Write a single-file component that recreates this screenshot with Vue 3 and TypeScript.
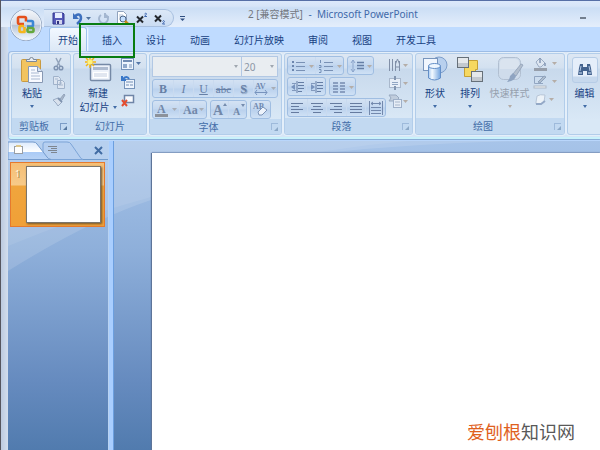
<script setup lang="ts">
import { ref } from 'vue'

const tabs: string[] = ['开始', '插入', '设计', '动画', '幻灯片放映', '审阅', '视图', '开发工具']
const activeTab = ref('开始')
const highlightedTab = '插入'
</script>

<template>
  <div class="window">
    <header class="titlebar">
      <button class="office" aria-label="Office">
        <svg width="34" height="34" viewBox="0 0 34 34">
          <defs>
            <linearGradient id="orb" x1="0" y1="0" x2="0" y2="1">
              <stop offset="0" stop-color="#f4f6fa" /><stop offset=".48" stop-color="#d5dce7" />
              <stop offset=".5" stop-color="#b6c3d6" /><stop offset="1" stop-color="#f3f9ff" />
            </linearGradient>
          </defs>
          <circle cx="17" cy="17" r="16" fill="#8d9fba" />
          <circle cx="17" cy="17" r="15" fill="url(#orb)" stroke="#eef5fd" />
          <g fill="none" stroke-width="2.6" stroke-linejoin="round">
            <path d="M15 16H10.500q-1.500 0-1.500-1.500V10.500q0-1.500 1.500-1.500h5q1.500 0 1.500 1.500v3" stroke="#e5501b" />
            <path d="M18 13h4.500q1.500 0 1.500 1.500v2.500q0 1.500-1.500 1.500H18" stroke="#3b87d4" />
            <path d="M15 18h-3q-1.500 0-1.500 1.500v3q0 1.500 1.500 1.500h3.500v-5" stroke="#f5b51c" />
            <path d="M18 20h5q1.500 0 1.500 1.500v1q0 1.500-1.500 1.500h-3q-1.500 0-1.500-1.500v-2" stroke="#64a83c" />
          </g>
        </svg>
      </button>
      <div class="quick">
        <button aria-label="保存">
          <svg width="13" height="13"><path d="M1 1h10l1 1v10H1z" fill="#5558b8" stroke="#34378f" /><path d="M3 1h7v5H3z" fill="#e7edff" /><path d="M4 8h6v4H4z" fill="#d3d5ed" /><path d="M5 9h2v3H5z" fill="#30337d" /></svg>
        </button>
        <button class="undo" aria-label="撤消">
          <svg width="20" height="13"><path d="M2 1v6h6z" fill="#3e70be" /><path d="M4 5C6 1 10 2 10 6q0 3-4 6" fill="none" stroke="#3e70be" stroke-width="2.500" /><path d="M15 5h5l-2.500 3z" fill="#51739f" /></svg>
        </button>
        <button aria-label="恢复">
          <svg width="13" height="13"><path d="M4 3a4.500 4.500 0 1 0 5 0M8 1v4h4" fill="none" stroke="#a3b6d0" stroke-width="2" /></svg>
        </button>
        <button aria-label="打印预览">
          <svg width="14" height="14"><path d="M1.500.5h6l3 3v9h-9z" fill="#fff" stroke="#91a3bd" /><path d="M3 4h4M3 6h4" stroke="#b6c4d9" /><circle cx="7" cy="8" r="3" fill="#c4dfff" stroke="#4b6486" /><path d="m9 10 3 3" stroke="#c98b1e" stroke-width="2.500" /></svg>
        </button>
        <button aria-label="上标">
          <svg width="12" height="13"><path d="m1 4.500 6 6m0-6-6 6" stroke="#24282e" stroke-width="2" /><path d="M8.500 2q1.500-2 2 0l-2 2.500H11" fill="none" stroke="#4069b1" /></svg>
        </button>
        <button aria-label="下标">
          <svg width="12" height="13"><path d="m1 3.500 6 6m0-6-6 6" stroke="#24282e" stroke-width="2" /><path d="M8.500 9.500q1.500-2 2 0l-2 2.500H11" fill="none" stroke="#4069b1" /></svg>
        </button>
      </div>
      <button class="customize" aria-label="自定义快速访问工具栏">
        <svg width="5" height="6"><path d="M0 .5h5" stroke="#304f81" /><path d="M0 2.500h5L2.500 5z" fill="#304f81" /></svg>
      </button>
      <h1 class="title"><span>2 [兼容模式]</span> - &nbsp;Microsoft PowerPoint</h1>
      <button class="minimize" aria-label="最小化"><svg width="7" height="4"><path d="M0 1h6" stroke="#737f8f" stroke-width="2" /></svg></button>
    </header>

    <nav class="tabs">
      <button v-for="tab in tabs" :key="tab" :class="{ active: tab === activeTab, marked: tab === highlightedTab }" @click="activeTab = tab">{{ tab }}</button>
    </nav>

    <div class="ribbon">
      <section class="group">
        <div class="body">
          <button class="big paste">
            <svg width="26" height="28" viewBox="0 0 26 28">
              <rect x="2.500" y="3.500" width="19" height="22" rx="1" fill="#f2c45f" stroke="#c99a41" />
              <path d="M7.500 5.500v-2h3q0-2 2-2t2 2h3v2z" fill="#e9edf4" stroke="#7d8998" />
              <path d="M9.500 10.500h9l5 5v11h-14z" fill="#f8faff" stroke="#8798b3" /><path d="M18.500 10.500v5h5" fill="#d7e2f3" stroke="#8798b3" />
              <path d="M12 14h4M12 17h8M12 20h9M12 23h9" stroke="#aab9d2" />
            </svg>
            <span>粘贴</span><i class="arrow"></i>
          </button>
          <div class="minis">
            <button aria-label="剪切"><svg width="14" height="14"><path d="m4 1 4 8m1-8L5 9" stroke="#92a3bb" stroke-width="1.500" /><circle cx="4" cy="11" r="1.800" fill="none" stroke="#8094b2" stroke-width="1.500" /><circle cx="9" cy="11" r="1.800" fill="none" stroke="#8094b2" stroke-width="1.500" /></svg></button>
            <button aria-label="复制"><svg width="14" height="14"><path d="M1.500 1.500h5l2 2v6h-7zM5.500 5.500h5l2 2v6h-7z" fill="#dce5f1" stroke="#a0b2ca" /><path d="M3 4h3M7 8h3M7 10h4" stroke="#a6b7ce" /></svg></button>
            <button aria-label="格式刷"><svg width="14" height="14"><path d="m8 6 4-5 1 1-3 5" fill="#a8b5c7" stroke="#94a5bd" /><path d="m1 7 5-2 4 4-4 4-2-3z" fill="#d8e1ed" stroke="#9badc5" /><path d="m6 5 4 4" stroke="#7f93b0" stroke-width="2" /></svg></button>
          </div>
        </div>
        <footer><span>剪贴板</span><button class="launcher" aria-label="剪贴板选项"></button></footer>
      </section>

      <section class="group">
        <div class="body">
          <button class="big newslide">
            <svg width="28" height="28" viewBox="0 0 28 28">
              <rect x="6.500" y="8.500" width="20" height="16" rx="1" fill="#edf2fa" stroke="#7589a6" stroke-width="1.500" />
              <path d="M9 11h15v3H9z" fill="#aebbd0" /><path d="M9 16h15v6H9z" fill="#fff" /><path d="M10 18h13M10 20h13" stroke="#c2cde0" />
              <path d="M6 1v11M1 6h11M2 2l8 8M10 2l-8 8" stroke="#f3b712" stroke-width="1.500" /><circle cx="6" cy="6" r="2.500" fill="#fff37d" />
            </svg>
            <span>新建</span><span class="line">幻灯片<i class="arrow"></i></span>
          </button>
          <div class="minis wide">
            <button aria-label="版式"><svg width="20" height="14"><rect x=".5" y="1.500" width="12" height="11" fill="#edf4fd" stroke="#7593ba" /><path d="M2 4h9" stroke="#718cb3" stroke-width="2" /><path d="M2 7h4v4H2z" fill="#90a9cb" /><path d="M8 8h3M8 10h3" stroke="#7993b6" /><path d="M15 5h5l-2.500 3z" fill="#5376a7" /></svg></button>
            <button aria-label="重设"><svg width="20" height="14"><rect x="3.500" y="4.500" width="10" height="9" fill="#edf4fd" stroke="#7593ba" /><path d="M5 7h7M5 10h3M9 10h3" stroke="#738eb4" /><path d="M1 1v4h4M2 4q4-4 6 0" fill="none" stroke="#3977c9" stroke-width="2" /></svg></button>
            <button aria-label="删除"><svg width="20" height="14"><rect x="3.500" y="2.500" width="9" height="7" fill="#f9fbff" stroke="#6f85a7" stroke-width="1.500" /><path d="m1 7 5 6M6 7l-5 6" stroke="#e34e31" stroke-width="2" /></svg></button>
          </div>
        </div>
        <footer><span>幻灯片</span></footer>
      </section>

      <section class="group">
        <div class="body rows font">
          <div class="combos">
            <label class="combo family"><select aria-label="字体" disabled><option></option></select></label>
            <label class="combo"><select aria-label="字号" disabled><option>20</option></select></label>
          </div>
          <div class="line">
            <div class="set six">
              <button disabled><b>B</b></button><button disabled><em>I</em></button><button disabled><u>U</u></button>
              <button disabled><s>abc</s></button><button disabled><b class="shadow">S</b></button>
              <button disabled aria-label="字符间距"><svg width="24" height="15"><text x="1" y="8" class="glyph">AV</text><path d="M1 11.500h12M3 9l-2 2.500L3 14M11 9l2 2.500-2 2.500" fill="none" stroke="#7793bd" /><path d="M17 6h5l-2.500 3z" fill="#a8adb6" /></svg></button>
            </div>
          </div>
          <div class="line">
            <div class="set color">
              <button disabled aria-label="字体颜色"><svg width="24" height="15"><text x="3" y="11" class="letter">A</text><path d="M1 13.500h13" stroke="#8c929b" stroke-width="3" /><path d="M18 6h5l-2.500 3z" fill="#a8adb6" /></svg></button>
              <button disabled aria-label="更改大小写"><svg width="24" height="15"><text x="2" y="12" class="letter">Aa</text><path d="M18 6h5l-2.500 3z" fill="#a8adb6" /></svg></button>
            </div>
            <div class="set sizes">
              <button disabled aria-label="增大字号"><svg width="16" height="15"><text x="1" y="13" class="letter large">A</text><path d="M11 4h4l-2-3z" fill="#758cae" /></svg></button>
              <button disabled aria-label="减小字号"><svg width="16" height="15"><text x="3" y="13" class="letter small">A</text><path d="M11 2h4l-2 3z" fill="#758cae" /></svg></button>
            </div>
            <div class="set clear"><button disabled aria-label="清除格式"><svg width="18" height="15"><text x="1" y="7" class="glyph">AB</text><path d="m6 10 5-5 4 3-5 5H7z" fill="#edf3fb" stroke="#7d94b8" /></svg></button></div>
          </div>
        </div>
        <footer><span>字体</span><button class="launcher dim" aria-label="字体选项"></button></footer>
      </section>

      <section class="group">
        <div class="body para">
          <div class="rows">
            <div class="line">
              <div class="set lists">
                <button disabled aria-label="项目符号"><svg width="24" height="14"><path d="M2 3h2M2 7h2M2 11h2" stroke="#6c86ae" stroke-width="2" /><path d="M6 3.500h9M6 7.500h9M6 11.500h9" stroke="#7991b5" /><path d="M19 6h5l-2.500 3z" fill="#b5ada7" /></svg></button>
                <button disabled aria-label="编号"><svg width="24" height="14"><path d="M2.500 1v3M1 6.500h2v2H1M1 10.500h2v3H1" fill="none" stroke="#7590b6" /><path d="M6 3.500h9M6 7.500h9M6 11.500h9" stroke="#7991b5" /><path d="M19 6h5l-2.500 3z" fill="#b5ada7" /></svg></button>
              </div>
              <div class="set"><button disabled aria-label="行距"><svg width="24" height="14"><path d="M4 1v12M2 4l2-3 2 3M2 10l2 3 2-3" fill="none" stroke="#8ba5cb" /><path d="M8 3.500h7M8 6.500h7M8 9.500h7" stroke="#667fa6" stroke-width="1.500" /><path d="M18 6h5l-2.500 3z" fill="#b5ada7" /></svg></button></div>
            </div>
            <div class="line">
              <div class="set indent">
                <button disabled aria-label="减少缩进"><svg width="15" height="14"><path d="M7 1v12M8 2.500h6M8 5.500h6M8 8.500h6M8 11.500h4" stroke="#657da4" /><path d="M6 3.500H2M6 10.500H2" stroke="#8299bd" /><path d="m5 4-4 3 4 3z" fill="#7893bd" /></svg></button>
                <button disabled aria-label="增加缩进"><svg width="15" height="14"><path d="M7 1v12M8 2.500h6M8 5.500h6M8 8.500h6M8 11.500h4" stroke="#657da4" /><path d="M6 3.500H2M6 10.500H2" stroke="#8299bd" /><path d="m2 4 4 3-4 3z" fill="#7893bd" /></svg></button>
              </div>
              <div class="set"><button disabled aria-label="分栏"><svg width="24" height="14"><path d="M2 3h5M2 6h5M2 9h5M2 12h5M9 3h5M9 6h5M9 9h5M9 12h5" stroke="#758bb0" stroke-width="1.500" /><path d="M18 6h5l-2.500 3z" fill="#b5ada7" /></svg></button></div>
            </div>
            <div class="line">
              <div class="set five">
                <button disabled aria-label="左对齐"><svg width="14" height="14"><path d="M1 2.500h12M1 5.500h8M1 8.500h12M1 11.500h8" stroke="#667b9f" /></svg></button>
                <button disabled aria-label="居中"><svg width="14" height="14"><path d="M1 2.500h12M3 5.500h8M1 8.500h12M3 11.500h8" stroke="#667b9f" /></svg></button>
                <button disabled aria-label="右对齐"><svg width="14" height="14"><path d="M1 2.500h12M5 5.500h8M1 8.500h12M5 11.500h8" stroke="#667b9f" /></svg></button>
                <button disabled aria-label="两端对齐"><svg width="14" height="14"><path d="M1 2.500h12M1 5.500h12M1 8.500h12M1 11.500h12" stroke="#667b9f" /></svg></button>
                <button disabled aria-label="分散对齐"><svg width="14" height="14"><path d="M.5 0v14M13.500 0v14M2 2.500h10M4 1 2 2.500 4 4M10 1l2 1.500L10 4M2 6.500h10M2 9.500h10M2 12.500h10" fill="none" stroke="#7389ad" /></svg></button>
              </div>
            </div>
          </div>
          <div class="minis wide">
            <button disabled aria-label="文字方向"><svg width="20" height="14"><path d="M1.500 1v12M4.500 1v12M7.500 3v10M11.500 3v10M8 9h4M7.500 6l2-5 2 5" fill="none" stroke="#8190a8" /><path d="M15 6h5l-2.500 3z" fill="#b5ada7" /></svg></button>
            <button disabled aria-label="对齐文本"><svg width="20" height="14"><rect x="1.500" y="2.500" width="11" height="9" fill="#e7eef7" stroke="#a9b8cc" /><path d="M4 6.500h6M4 8.500h6" stroke="#91a6c3" /><path d="M7 0v4M7 10v4" stroke="#8295b0" stroke-width="2" /><path d="M15 6h5l-2.500 3z" fill="#b5ada7" /></svg></button>
            <button disabled aria-label="转换为 SmartArt"><svg width="20" height="14"><path d="M1 1h7l3 3-3 3H1l2-3z" fill="#c0cddd" stroke="#99aac1" /><rect x="5.500" y="5.500" width="8" height="8" fill="#e6edf6" stroke="#9eb0c9" /><path d="M7 8h5M7 11h5" stroke="#a7b6ca" /><path d="M15 6h5l-2.500 3z" fill="#b5ada7" /></svg></button>
          </div>
        </div>
        <footer><span>段落</span><button class="launcher dim" aria-label="段落选项"></button></footer>
      </section>

      <section class="group">
        <div class="body drawing">
          <button class="big">
            <svg width="28" height="28" viewBox="0 0 28 28">
              <defs><linearGradient id="cyl"><stop offset="0" stop-color="#a6c8f0" /><stop offset=".3" stop-color="#f4faff" /><stop offset="1" stop-color="#73a4df" /></linearGradient></defs>
              <circle cx="18" cy="9" r="8" fill="#b8d0ee" stroke="#7e9fcb" /><rect x="2.500" y="2.500" width="14" height="12" fill="#f0f6fe" stroke="#7895bd" />
              <path d="M7.500 10v12q6 4 12 0V10z" fill="url(#cyl)" stroke="#638fc8" /><ellipse cx="13.500" cy="10" rx="6" ry="2.500" fill="#edf6ff" stroke="#638fc8" />
            </svg><span>形状</span><i class="arrow"></i>
          </button>
          <button class="big">
            <svg width="28" height="28" viewBox="0 0 28 28">
              <path d="M10.500 4.500h11v9h-2v7h-11v-9h2z" fill="#f6d860" stroke="#c5a035" /><rect x="1.500" y="1.500" width="11" height="10" fill="#c3c9cf" stroke="#667079" /><path d="M2 2h10v5H2z" fill="#e5e8eb" />
              <rect x="15.500" y="15.500" width="11" height="10" fill="#c3c9cf" stroke="#667079" /><path d="M16 16h10v5H16z" fill="#e5e8eb" />
            </svg><span>排列</span><i class="arrow"></i>
          </button>
          <button class="big styles" disabled>
            <svg width="28" height="28" viewBox="0 0 28 28">
              <rect x="2.500" y="1.500" width="22" height="22" rx="5" fill="#cfdceb" stroke="#b1bfd1" /><path d="M4 13h19V7q0-4-4-4H8Q4 3 4 7z" fill="#dae4ef" />
              <path d="m17 18 8-10 2 1-7 11z" fill="#b3bfce" stroke="#99a9bf" /><path d="m17 17 3 3q-1 5-9 6 3-3 3-6z" fill="#8fa4c1" />
            </svg><span>快速样式</span><i class="arrow"></i>
          </button>
          <div class="minis wide">
            <button disabled aria-label="形状填充"><svg width="24" height="14"><path d="m3 5 4-4 5 5-4 4H6z" fill="#dde6f1" stroke="#9bacc3" /><path d="M7 1v5M12 6v3" stroke="#8397b4" stroke-width="1.500" /><path d="M1 12.500h13" stroke="#969eaa" stroke-width="3" /><path d="M19 5h5l-2.500 3z" fill="#b5ada7" /></svg></button>
            <button disabled aria-label="形状轮廓"><svg width="24" height="14"><path d="M10 1.500H1.500v7H10" fill="none" stroke="#91a5c1" /><path d="m5 7 6-6 2 1-6 6z" fill="#aebccd" stroke="#8da1bb" /><rect x="1" y="11" width="12" height="2" fill="#f4f4f2" stroke="#adb8c6" /><path d="M19 5h5l-2.500 3z" fill="#b5ada7" /></svg></button>
            <button disabled aria-label="形状效果"><svg width="24" height="14"><path d="m3 9 1-6q3-2 8-1l-1 7-3 2H3z" fill="#ecf2f8" stroke="#b7c5d7" /><path d="M3 11h5l4-3" fill="none" stroke="#94a9c7" stroke-width="2" /><path d="M16 5h5l-2.500 3z" fill="#b5ada7" /></svg></button>
          </div>
        </div>
        <footer><span>绘图</span><button class="launcher dim" aria-label="绘图选项"></button></footer>
      </section>

      <section class="group editing">
        <div class="body">
          <button class="big">
            <span class="frame"><svg width="16" height="14" viewBox="0 0 16 14"><path d="M3 1h3v3h4V1h3l1 4 1 7h-5V8H6v4H1l1-7z" fill="#43628e" /><path d="M4 3 3 8M12 3l1 5" stroke="#b3c8e5" /><path d="M2 10h3M11 10h3" stroke="#d2e2f6" /></svg></span>
            <span>编辑</span><i class="arrow"></i>
          </button>
        </div>
      </section>
    </div>

    <main class="workspace">
      <svg class="swoosh" viewBox="0 0 592 309" preserveAspectRatio="none" aria-hidden="true">
        <path d="M0 0H592Q450 -2 317 12Q230 28 143 59Q80 80 0 130z" fill="#fff" opacity=".13" />
        <path d="M0 0H400Q260 12 143 56Q70 76 0 105z" fill="#fff" opacity=".08" />
      </svg>
      <aside class="slides">
        <div class="pane-tabs">
          <svg width="76" height="19" viewBox="0 0 76 19" aria-hidden="true">
            <defs><linearGradient id="pt" x1="0" y1="0" x2="0" y2="1"><stop offset="0" stop-color="#dceafc" /><stop offset=".55" stop-color="#fff" /><stop offset=".6" stop-color="#abcbf6" /><stop offset="1" stop-color="#b9d3f5" /></linearGradient></defs>
            <path d="M35 18.500V3q0-2 2-2h22q3 0 4 2l9 13q1 2 3 2.500z" fill="#b6cff0" stroke="#7da5d8" />
            <path d="M0 18.500V1h25q3 0 4 2l10 13q1 2 4 2.500z" fill="url(#pt)" stroke="#769cce" />
            <rect x="6.500" y="5.500" width="8" height="7" fill="#fff" stroke="#9a9fa6" /><path d="M8 5h5" stroke="#ddc78d" stroke-width="2" />
            <path d="M40 5.500h9M43 7.500h6M40 9.500h9M43 11.500h6" stroke="#7e8690" />
          </svg>
          <button class="close" aria-label="关闭"><svg width="9" height="9"><path d="m1 1 7 7M8 1 1 8" stroke="#416ca3" stroke-width="2" /></svg></button>
        </div>
        <button class="thumb" aria-label="幻灯片 1"><span class="number">1</span><span class="preview"></span></button>
      </aside>
      <div class="splitter"></div>
      <div class="canvas"><article class="slide"></article></div>
      <p class="watermark"><span>爱刨根</span>知识网</p>
    </main>
  </div>
</template>

<style>
body { margin: 0; overflow: hidden; }
</style>

<style scoped>
* { box-sizing: border-box; }
.window {
  min-height: 100vh; display: flex; flex-direction: column; overflow: hidden;
  border-left: 1px solid #56565f; padding-left: 7px;
  background: linear-gradient(90deg, #bccadf, #d3deed 7px, #bfdbff 8px);
  color: #173f82; font: 10px/14px "Noto Sans", "Noto Sans CJK SC", sans-serif;
}
button { border: 0; padding: 0; margin: 0; background: none; font: inherit; color: inherit; display: flex; align-items: center; justify-content: center; }
svg { display: block; flex: none; }
.arrow { display: block; border: 2px solid transparent; border-top: 3px solid #426ca6; border-bottom: 0; }

.titlebar { position: relative; height: 27px; margin-left: -7px; padding-left: 43px; display: flex; align-items: flex-end; border-top: 1px solid #566fa6; background: linear-gradient(#dce9fb, #d7e5f8 5px, #cbdef5 7px, #e3edfb 25px); }
.office { position: absolute; z-index: 2; left: 8px; top: 7px; }
.quick { height: 18px; width: 130px; display: flex; align-items: center; gap: 6px; padding-left: 8px; border: 1px solid #a9c0df; border-left: 0; border-radius: 0 9px 9px 0; background: linear-gradient(#dce8f7, #cadcf3); }
.customize { height: 16px; margin-left: 6px; }
.title { flex: 1; margin: 0 0 0 63px; font-size: 10px; line-height: 16px; font-weight: 400; color: #4169a9; white-space: nowrap; align-self: center; }
.title span { color: #73777e; margin-right: 3px; }
.minimize { height: 16px; padding-right: 13px; }

.tabs { display: flex; height: 24px; gap: 6px; padding-left: 41px; background: #bfdbff; }
.tabs button { position: relative; padding: 2px 9px 0; white-space: nowrap; }
.tabs .active { border: 1px solid #9fc3ee; border-bottom: 0; border-radius: 3px 3px 0 0; padding: 1px 8px 0; background: linear-gradient(#f2f8ff, #dce8f6); box-shadow: 1px 0 2px #fff; }
.tabs .marked::after { content: ""; position: absolute; z-index: 3; inset: -4px -4px -7px -14px; border: 2px solid #087d12; }

.ribbon { display: flex; gap: 2px; height: 88px; padding: 1px 0 2px 2px; border: 1px solid #9dbce5; border-right: 0; border-bottom: 2px solid #c9f2fb; border-radius: 4px 0 0 4px; background: linear-gradient(#dce8f5, #c8dbf0 20px, #d6e6f6 80px); box-shadow: 0 1px 1px #86a9d4; }
.group { flex: none; display: flex; flex-direction: column; border: 1px solid #b2cdea; border-radius: 3px; overflow: hidden; background: linear-gradient(#dde7f3, #d3e1f0 14px, #c8d9ec 15px, #d9e8f6 66px); box-shadow: 0 0 0 1px #e4effa; }
.body { flex: 1; display: flex; padding: 1px 3px 0 2px; }
.group footer { height: 16px; display: flex; align-items: center; background: #c2d9f1; color: #426da8; }
.group footer span { flex: 1; text-align: center; }
.launcher { width: 14px; height: 14px; position: relative; }
.launcher::before { content: ""; width: 6px; height: 6px; border: 1px solid #7b9cc6; border-right: 0; border-bottom: 0; }
.launcher::after { content: ""; position: absolute; right: 3px; bottom: 3px; border: 2px solid #56789f; border-top-color: transparent; border-left-color: transparent; }
.dim { opacity: .5; }
.big { width: 34px; flex-direction: column; justify-content: flex-start; white-space: nowrap; }
.big > svg { margin: 1px 0 2px; }
.big > .arrow { margin-top: 5px; }
.line { display: flex; align-items: center; gap: 3px; }
.paste { width: 36px; }
.newslide { width: 44px; }
.minis { display: flex; flex-direction: column; width: 17px; }
.minis button { height: 18px; justify-content: flex-start; padding-left: 2px; }
.minis.wide { width: 23px; }
.wide button { padding-left: 1px; }

.rows { display: flex; flex-direction: column; gap: 2px; }
.combos { display: flex; height: 21px; margin-top: 1px; }
.combo { position: relative; width: 37px; margin-left: -1px; border: 1px solid #b2c8e4; background: #e9edf1; }
.family { flex: 1; margin-left: 0; }
.combo select { appearance: none; width: 100%; height: 100%; border: 0; padding: 0 2px; background: none; font: 10px "Noto Sans", sans-serif; color: #8c96a5; opacity: 1; }
.combo::after { content: ""; position: absolute; right: 3px; top: 8px; border: 2px solid transparent; border-top: 3px solid #a0a7b0; border-bottom: 0; }
.font { width: 131px; }
.set { display: flex; height: 19px; border: 1px solid #a0bee2; border-radius: 3px; background: linear-gradient(#d4e2f3, #c4d8f0 8px, #bad1ed 9px, #cfe1f5); }
.set button { flex: 1; color: #6780a6; font-family: "Liberation Serif", serif; font-size: 12px; line-height: 12px; }
.set button + button { border-left: 1px solid #c9daef; }
.set s { font-size: 11px; }
.shadow { text-shadow: 1px 1px 1px #8197b7; }
.six { width: 126px; }
.six button { flex: 0 0 20px; }
.six button:last-child { flex: 1; }
.color { width: 55px; }
.sizes { width: 37px; }
.clear { width: 21px; }
.glyph { font: bold 8px "Liberation Serif", serif; fill: #7089b0; }
.letter { font: bold 12px "Liberation Serif", serif; fill: #7288a9; }
.large { font-size: 14px; }
.small { font-size: 10px; }
.para { gap: 1px; padding: 2px 2px 0; }
.lists { width: 57px; }
.lists + .set, .indent + .set { width: 27px; }
.indent { width: 39px; }
.five { width: 99px; }
.drawing { padding-left: 2px; gap: 1px; }
.styles { width: 43px; color: #96a0ae; }
.styles .arrow { border-top-color: #b5ada7; }
.drawing .wide { width: 29px; }
.editing { flex: 1 0 38px; margin-right: -5px; }
.editing .body { padding-left: 0; }
.frame { width: 26px; height: 26px; margin: 2px 0 3px; display: flex; align-items: center; justify-content: center; border: 1px solid #b6cce6; border-radius: 3px; background: linear-gradient(#e5eefa 18px, #c6d8ed 19px); }

.workspace { position: relative; flex: 1; display: flex; margin-top: 2px; background: linear-gradient(#a7c4e9, #8eafda 110px, #668bbf 240px, #517bae); }
.swoosh { position: absolute; width: 100%; height: 100%; }
.slides { position: relative; width: 100px; flex: none; }
.pane-tabs { height: 19px; display: flex; justify-content: space-between; align-items: center; border-bottom: 1px solid #719bcc; background: #b7d0ef; }
.close { padding-right: 5px; }
.thumb { width: 95px; height: 65px; margin: 2px 0 0 2px; padding: 3px; align-items: stretch; justify-content: space-between; border: 1px solid #e67a2d; background: linear-gradient(#f5bf75, #f7ca89 22px, #f0a53d 23px, #f0a037); }
.number { padding: 2px 0 0 1px; color: #fff8df; font-size: 9px; line-height: 12px; text-shadow: 1px 1px 0 #8d7851; }
.preview { width: 75px; border: 1px solid #7b756b; background: #fff; box-shadow: 1px 1px 2px #6d542d; }
.splitter { position: relative; width: 6px; border-left: 1px solid #b8d2f1; border-right: 1px solid #6c9fdf; background: #a9ceff; }
.canvas { position: relative; flex: 1; display: flex; padding: 12px 0 0 38px; }
.slide { flex: 1; background: #fff; box-shadow: -1px 0 1px #5d7499, 0 -1px 1px #8da7ca; }
.watermark { position: absolute; right: 25px; bottom: 6px; margin: 0; color: #595959; font: 18px/26px "Noto Sans CJK SC", sans-serif; }
.watermark span { color: #df611e; }
</style>
